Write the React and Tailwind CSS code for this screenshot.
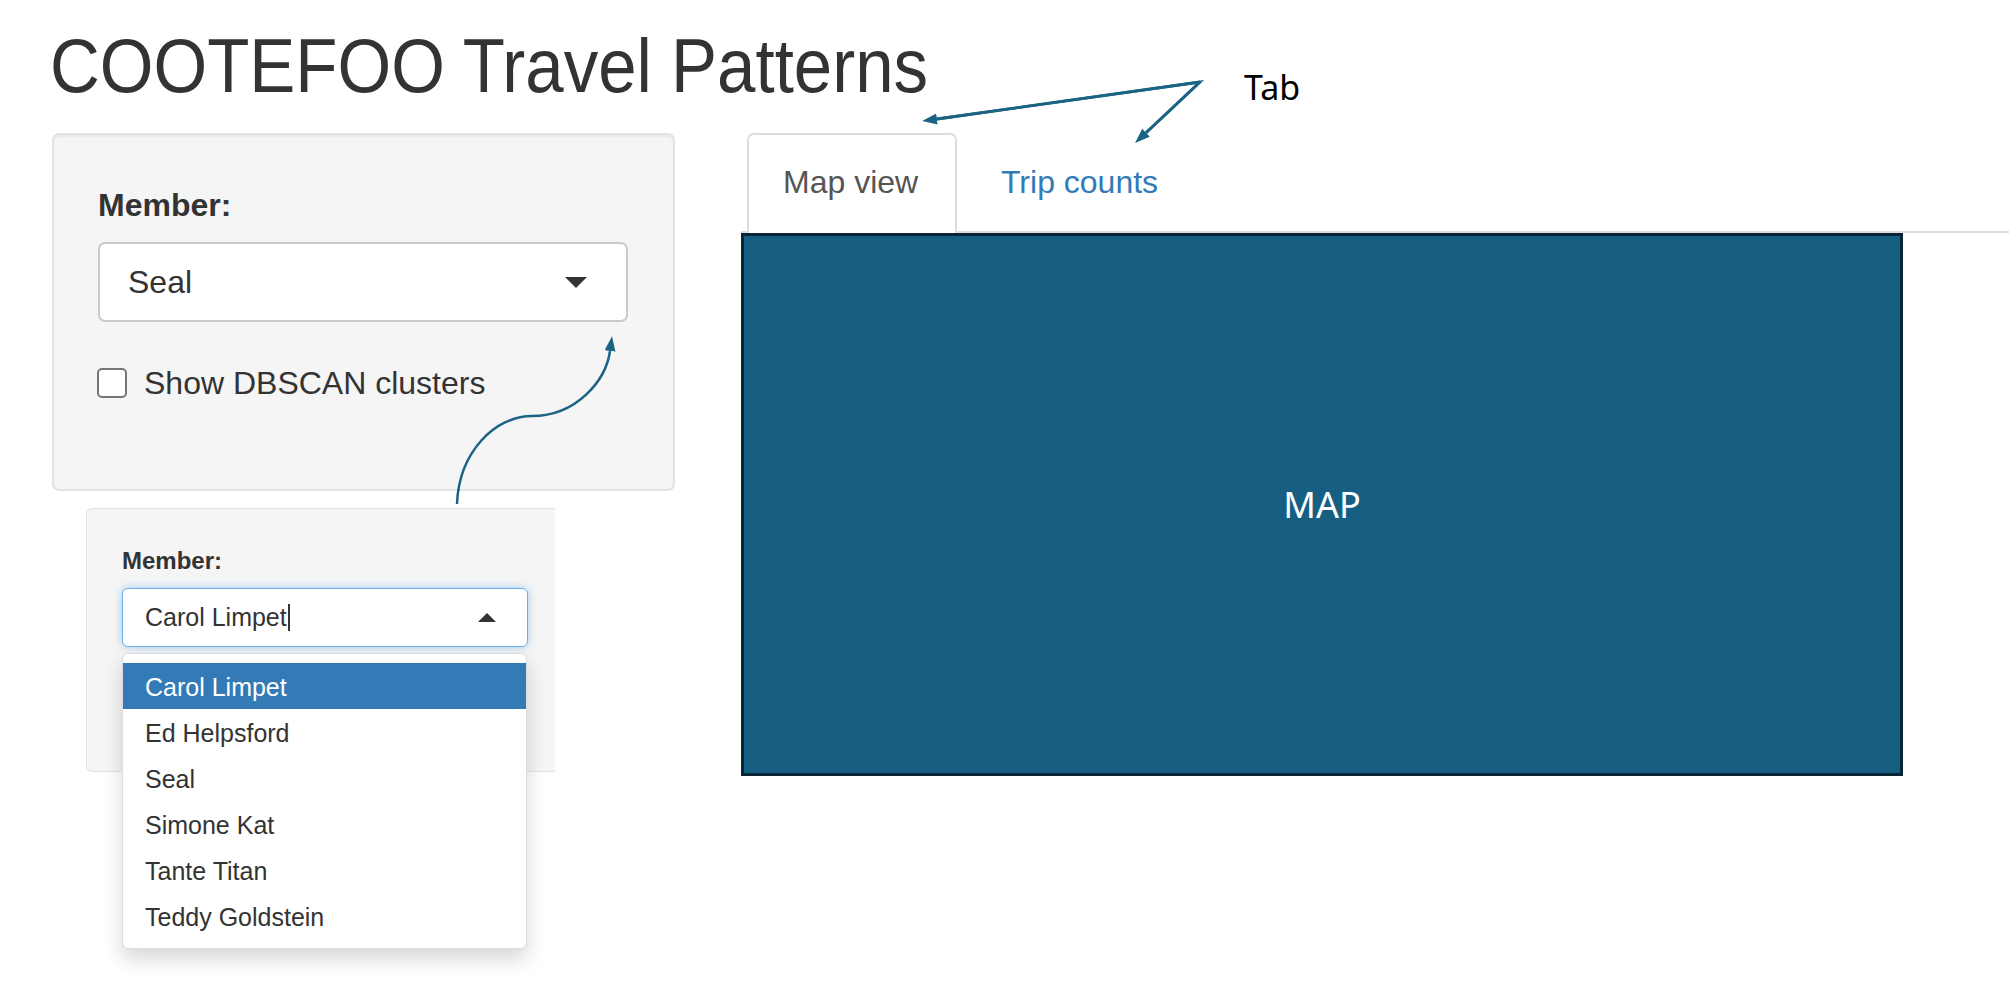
import React from "react";

function Caret({ up = false, w, h, color = "#333" }) {
  return (
    <svg width={w} height={h} viewBox={`0 0 ${w} ${h}`} className="block shrink-0">
      {up ? (
        <polygon points={`0,${h} ${w / 2},0 ${w},${h}`} fill={color} />
      ) : (
        <polygon points={`0,0 ${w},0 ${w / 2},${h}`} fill={color} />
      )}
    </svg>
  );
}

const members = ["Carol Limpet", "Ed Helpsford", "Seal", "Simone Kat", "Tante Titan", "Teddy Goldstein"];

export default function App() {
  return (
    <div className="relative w-[2009px] h-[990px] overflow-hidden bg-white text-[#333] font-['Liberation_Sans',Arial,sans-serif]">
      {/* Title */}
      <div className="pt-[34px] pl-[50px]">
        <div className="text-[69px] leading-none scale-y-[1.09] origin-[0_58px]">COOTEFOO Travel Patterns</div>
      </div>

      <div className="mt-[30px] flex items-start">
        {/* Left column */}
        <div className="ml-[52px] w-[623px] shrink-0 flex flex-col">
          {/* Panel 1 */}
          <div className="h-[358px] rounded-[7px] border-2 border-[#e3e3e3] bg-[#f5f5f5] pl-[44px] pr-[45px] pt-[54px] shadow-[inset_0_2px_2px_rgba(0,0,0,0.05)]">
            <div className="text-[32px] font-bold leading-none">Member:</div>
            <div className="mt-[21px] h-[80px] w-[530px] rounded-[7px] border-2 border-[#cbcbcb] bg-white pl-[28px] pr-[39px] flex items-center justify-between">
              <span className="text-[32px] leading-none">Seal</span>
              <Caret w={22} h={11} />
            </div>
            <div className="mt-[45px] flex items-center ml-[-1px]">
              <div className="w-[30px] h-[30px] rounded-[5px] border-2 border-[#767676] bg-white shrink-0"></div>
              <span className="ml-[17px] text-[32px] leading-none">Show DBSCAN clusters</span>
            </div>
          </div>

          {/* Panel 2 (zoomed dropdown) */}
          <div className="ml-[34px] mt-[17px] w-[469px] h-[264px] rounded-l-[6px] border-l border-t border-b border-[#e3e3e3] bg-[#f5f5f5] pl-[35px] pt-[40px]">
            <div className="text-[24px] font-bold leading-none">Member:</div>
            <div className="relative mt-[15px] w-[406px]">
              <div className="h-[59px] rounded-[6px] border border-[#66afe9] bg-white pl-[22px] pr-[31px] flex items-center justify-between shadow-[0_0_8px_rgba(102,175,233,0.6)]">
                <span className="flex items-center">
                  <span className="text-[25px] leading-none">Carol Limpet</span>
                  <span className="ml-[1px] w-[2px] h-[27px] bg-[#333]"></span>
                </span>
                <Caret up w={18} h={9} />
              </div>
              <div className="absolute left-0 top-[calc(100%+6px)] w-[405px] rounded-[6px] border border-[#dcdcdc] bg-white py-[9px] shadow-[0_10px_20px_rgba(0,0,0,0.16)]">
                {members.map((m, i) => (
                  <div
                    key={m}
                    className={
                      i === 0
                        ? "h-[46px] pl-[22px] pt-[2px] flex items-center bg-[#337ab7] text-white text-[25px] leading-none"
                        : "h-[46px] pl-[22px] pt-[2px] flex items-center text-[#333] text-[25px] leading-none"
                    }
                  >
                    {m}
                  </div>
                ))}
              </div>
            </div>
          </div>
        </div>

        {/* Right column */}
        <div className="ml-[66px] flex-1 flex flex-col">
          <div className="flex items-end border-b-2 border-[#ddd] h-[100px]">
            <div className="ml-[6px] mb-[-2px] h-[100px] w-[210px] rounded-t-[7px] border-2 border-b-0 border-[#ddd] bg-white pl-[34px] pt-[31px] text-[32px] leading-none text-[#555]">
              Map view
            </div>
            <div className="ml-[8px] mb-[-2px] h-[100px] border-2 border-transparent pl-[34px] pr-[34px] pt-[31px] text-[32px] leading-none text-[#337ab7]">
              Trip counts
            </div>
          </div>
          <div className="w-[1162px] h-[543px] border-[3px] border-[#0a2636] bg-[#175f82] flex items-center justify-center">
            <span className="text-white text-[36px] leading-none font-['Noto_Sans',sans-serif]">MAP</span>
          </div>
        </div>
      </div>

      {/* Annotation label */}
      <div className="absolute left-[1244px] top-[70px] text-[34px] leading-none text-black font-['Noto_Sans',sans-serif]">Tab</div>

      {/* Annotation arrows */}
      <svg className="absolute inset-0 pointer-events-none" width="2009" height="990" viewBox="0 0 2009 990">
        <defs>
          <marker id="ah" markerUnits="userSpaceOnUse" markerWidth="16" markerHeight="12" refX="0" refY="5.5" orient="auto">
            <path d="M0,0 L15,5.5 L0,11 z" fill="#1a6383" />
          </marker>
        </defs>
        <polyline points="937,119 1200,82 1146,132.7" fill="none" stroke="#1a6383" strokeWidth="2.8" strokeLinejoin="miter" />
        <line x1="1200" y1="82" x2="937" y2="119" stroke="#1a6383" strokeWidth="2.8" markerEnd="url(#ah)" />
        <line x1="1200" y1="82" x2="1146" y2="132.7" stroke="#1a6383" strokeWidth="2.8" markerEnd="url(#ah)" />
        <path d="M457,504 C459,452 495,416 532,416 C577,416 606,380 610,351" fill="none" stroke="#1a6383" strokeWidth="2.5" markerEnd="url(#ah)" />
      </svg>
    </div>
  );
}
